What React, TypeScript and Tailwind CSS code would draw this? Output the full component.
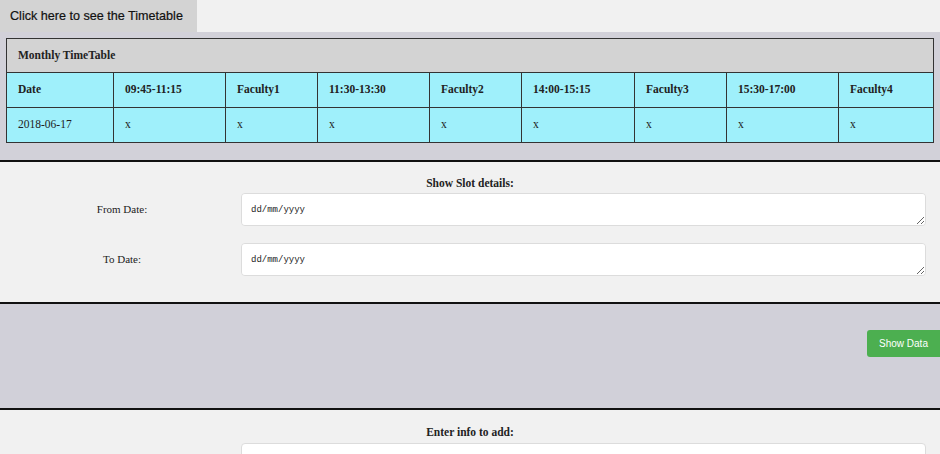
import React from 'react'

const cols = [107, 112, 92, 112, 92, 113, 92, 112, 95]
const headers = ['Date', '09:45-11:15', 'Faculty1', '11:30-13:30', 'Faculty2', '14:00-15:15', 'Faculty3', '15:30-17:00', 'Faculty4']
const row = ['2018-06-17', 'x', 'x', 'x', 'x', 'x', 'x', 'x', 'x']

const DateBox: React.FC = () => (
  <textarea
    defaultValue="dd/mm/yyyy"
    className="h-[33px] flex-1 rounded-[4px] border border-[#dcdcdc] bg-white px-[9px] py-[10px] font-['Liberation_Mono'] text-[9px] leading-[13px] text-[#222] outline-none"
  />
)

const FieldRow: React.FC<{ label: string }> = ({ label }) => (
  <div className="flex items-center pr-[14px]">
    <label className="w-[241px] pl-[3px] text-center text-[11px] text-[#222]">{label}</label>
    <DateBox />
  </div>
)

export default function App() {
  return (
    <div className="h-[454px] overflow-hidden bg-[#f1f1f1] font-['Liberation_Serif',serif]">
      {/* tab bar */}
      <div className="flex h-8 bg-[#f1f1f1]">
        <button className="h-8 w-[197px] bg-[#d3d3d3] pl-[10px] text-left font-['Liberation_Sans',sans-serif] text-[12.6px] text-[#111] [-webkit-text-stroke:0.2px_#111]">
          Click here to see the Timetable
        </button>
      </div>

      {/* timetable */}
      <div className="h-[130px] border-b-2 border-[#111] bg-[#d2d1d9] px-[6px] pt-[6px]">
        <table className="w-[927px] table-fixed border-collapse border border-[#333] text-[11.5px] text-[#222]">
          <colgroup>
            {cols.map((w, i) => (
              <col key={i} style={{ width: w }} />
            ))}
          </colgroup>
          <tbody>
            <tr>
              <th colSpan={9} className="h-[34px] border border-[#333] bg-[#d3d3d3] pl-[11px] text-left font-bold">
                Monthly TimeTable
              </th>
            </tr>
            <tr>
              {headers.map((h) => (
                <th key={h} className="h-[35px] border border-[#333] bg-[#9ff0fb] pl-[11px] text-left font-bold">
                  {h}
                </th>
              ))}
            </tr>
            <tr>
              {row.map((c, i) => (
                <td key={i} className="h-[35px] border border-[#333] bg-[#9ff0fb] pl-[11px] text-left">
                  {c}
                </td>
              ))}
            </tr>
          </tbody>
        </table>
      </div>

      {/* slot details */}
      <div className="h-[142px] border-b-2 border-[#111] bg-[#f1f1f1]">
        <h3 className="pt-[14px] text-center text-[11.5px] font-bold leading-[14px] text-[#222]">Show Slot details:</h3>
        <div className="mt-[3px] flex flex-col gap-[17px]">
          <FieldRow label="From Date:" />
          <FieldRow label="To Date:" />
        </div>
      </div>

      {/* actions */}
      <div className="flex h-[106px] justify-end border-b-2 border-[#111] bg-[#d1d0d9] pt-[26px]">
        <button className="h-[27px] w-[73px] rounded-l-[3px] bg-[#4caf50] font-['Liberation_Sans',sans-serif] text-[10px] text-white">
          Show Data
        </button>
      </div>

      {/* add info */}
      <div className="bg-[#f1f1f1]">
        <h3 className="pt-[15px] text-center text-[11.5px] font-bold leading-[14px] text-[#222]">Enter info to add:</h3>
        <div className="mt-[4px] flex items-center pr-[14px]">
          <label className="w-[241px] text-center text-[11px] text-[#222]">Date:</label>
          <div className="h-[33px] flex-1 rounded-[4px] border border-[#dcdcdc] bg-white" />
        </div>
      </div>
    </div>
  )
}
